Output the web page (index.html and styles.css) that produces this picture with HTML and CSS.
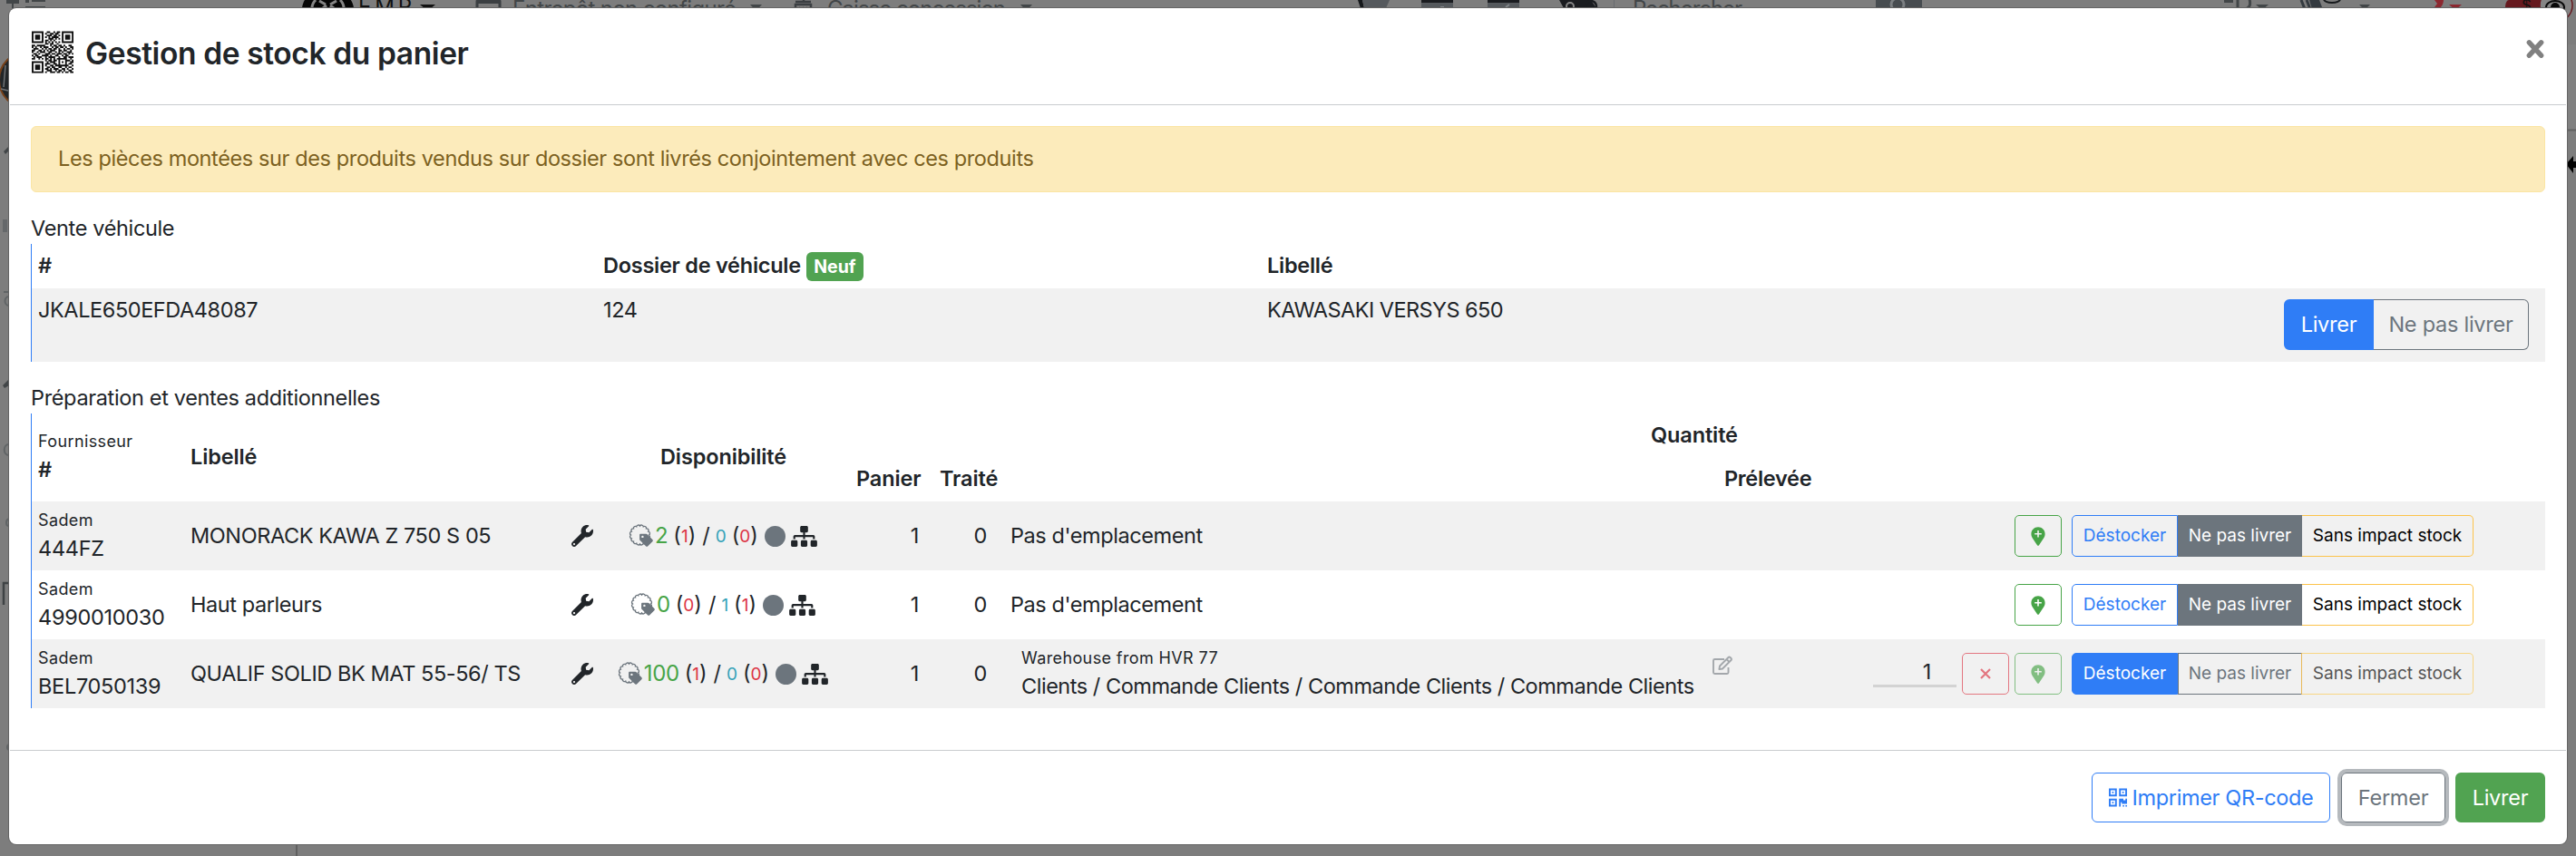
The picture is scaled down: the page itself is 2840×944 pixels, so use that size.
FILE: index.html
```html
<!DOCTYPE html>
<html lang="fr">
<head>
<meta charset="utf-8">
<title>Gestion de stock du panier</title>
<link rel="stylesheet" href="styles.css">
</head>
<body>
<svg class="defs" width="0" height="0" aria-hidden="true">
  <symbol id="wrench" viewBox="0 0 512 512"><path d="M507.700 109.100c-2.200-9-13.500-12.100-20.100-5.500l-74.400 74.400-67.900-11.300L334 98.900l74.400-74.400c6.600-6.600 3.400-17.900-5.700-20.200-47.400-11.700-99.600.9-136.600 37.900-39.600 39.600-50.500 97.100-34.100 147.200L18.700 402.800c-25 25-25 65.500 0 90.500s65.500 25 90.500 0l213.200-213.200c50.100 16.700 107.500 5.700 147.400-34.200 37.100-37.100 49.700-89.300 37.900-136.800zM64 472c-13.200 0-24-10.800-24-24 0-13.300 10.700-24 24-24s24 10.700 24 24c0 13.200-10.700 24-24 24z"/></symbol>
  <symbol id="tag" viewBox="0 0 28 26"><path d="M22.500 12a2.100 2.100 0 0 1-.76 3.830a2.100 2.100 0 0 1-2.170 3.240a2.100 2.100 0 0 1-3.240 2.170a2.100 2.100 0 0 1-3.830.76a2.100 2.100 0 0 1-3.830-.76a2.100 2.100 0 0 1-3.240-2.170a2.100 2.100 0 0 1-2.170-3.240a2.100 2.100 0 0 1-.76-3.830a2.100 2.100 0 0 1 .76-3.830a2.100 2.100 0 0 1 2.170-3.240a2.100 2.100 0 0 1 3.240-2.170a2.100 2.100 0 0 1 3.830-.76a2.100 2.100 0 0 1 3.830.76a2.100 2.100 0 0 1 3.240 2.170a2.100 2.100 0 0 1 2.170 3.240a2.100 2.100 0 0 1 .76 3.830z" fill="none" stroke="#6c757d" stroke-width="1.400"/><path d="M13.200 10.800h6.200c.6 0 1 .2 1.400.6l5.500 5.600c.7.700.7 1.600 0 2.300l-5 5c-.7.700-1.600.7-2.300 0l-6.300-6.200c-.4-.4-.6-.8-.6-1.300v-4.900c0-.7.500-1.100 1.100-1.100z" fill="#6c757d"/><circle cx="15.400" cy="13.900" r="1.200" fill="#f2f2f2"/></symbol>
  <symbol id="tree" viewBox="0 0 640 512"><path d="M128 352H32c-17.700 0-32 14.300-32 32v96c0 17.700 14.300 32 32 32h96c17.700 0 32-14.300 32-32v-96c0-17.700-14.300-32-32-32zm-24-80h192v48h48v-48h192v48h48v-57.600c0-21.200-17.200-38.400-38.400-38.400H344v-64h40c17.700 0 32-14.300 32-32V32c0-17.700-14.300-32-32-32H256c-17.700 0-32 14.300-32 32v96c0 17.700 14.300 32 32 32h40v64H94.400C73.200 224 56 241.200 56 262.400V320h48v-48zm264 80h-96c-17.700 0-32 14.300-32 32v96c0 17.700 14.300 32 32 32h96c17.700 0 32-14.300 32-32v-96c0-17.700-14.300-32-32-32zm240 0h-96c-17.700 0-32 14.300-32 32v96c0 17.700 14.300 32 32 32h96c17.700 0 32-14.300 32-32v-96c0-17.700-14.300-32-32-32z"/></symbol>
  <symbol id="pin" viewBox="0 0 16 21"><path fill="currentColor" fill-rule="evenodd" d="M8 .2C3.700.2.400 3.500.400 7.800c0 3.100 1.200 4.600 6.600 12.400.5.700 1.500.7 2 0 5.400-7.800 6.600-9.300 6.600-12.400C15.600 3.500 12.300.2 8 .2zM7.200 4h1.600v3h3v1.600h-3v3H7.200v-3h-3V7h3z"/></symbol>
  <symbol id="edit" viewBox="0 0 24 22"><path d="M14 4H3.500C2.500 4 2 4.600 2 5.500v13c0 .9.500 1.500 1.500 1.500H17c1 0 1.500-.6 1.500-1.500V13M9 11.500 18.500 2c.6-.6 1.400-.6 2 0l1 1c.6.600.6 1.400 0 2L12 14.500l-3.600.6zM16.500 4l3 3" fill="none" stroke="#a3a7ab" stroke-width="1.900" stroke-linejoin="round"/></symbol>
  <symbol id="qrsmall" viewBox="0 0 21 21"><path fill="currentColor" fill-rule="evenodd" d="M0 0h9.200v9.200H0zM2 2v5.200h5.200V2zM3.700 3.700h1.800v1.800H3.700zM11.800 0H21v9.200h-9.200zM13.800 2v5.200H19V2zM15.500 3.700h1.800v1.800h-1.800zM0 11.800h9.200V21H0zM2 13.800V19h5.200v-5.200zM3.700 15.500h1.800v1.800H3.700zM11.800 11.800h5v1.800h2.400v-1.800H21v6h-6V16h-1.300v5h-1.900zM16 19.300h1.800V21H16zM19.200 19.300H21V21h-1.800z"/></symbol>
</svg>

<svg class="backdrop" viewBox="0 0 2840 944" aria-hidden="true">
  <rect width="2840" height="944" fill="#7d7d7d"/>
  <path d="M7 0h14v4H7zM13 3h2v6h-2zM28 0h4v3h-4zM35 0h15v2H35zM28 7h22v2H28z" fill="#424648"/>
  <path d="M333 9c1-9 7-17 17-18h22c10 1 17 9 18 18z" fill="#060606"/>
  <path d="M344 9c0-4 2-7 4-9M379 9c0-4-2-7-4-9M352 1l7 4M371 1l-7 4M356 9l4-3M368 9l-4-3" stroke="#858585" stroke-width="3" fill="none"/>
  <text x="395" y="16" font-size="24" fill="#111" textLength="59">EMP</text>
  <path d="M463 5h17l-8.500 7z" fill="#111"/>
  <path d="M526 12V2c0-2 2-3 4-3h17c2 0 4 1 4 3v10" fill="none" stroke="#3b3f42" stroke-width="3"/><path d="M525 0h27v4h-27z" fill="#3b3f42"/>
  <text x="565" y="18" font-size="24" fill="#424648" textLength="247">Entrepôt non configuré</text>
  <path d="M827 5h13l-6.500 7zM1125 5h13l-6.500 7z" fill="#424648"/>
  <path d="M877 2h17M886 0v3M877 12V5h17v7M881 9h1M885 9h1M889 9h1" stroke="#3b3f42" stroke-width="2.500" fill="none"/>
  <text x="912" y="18" font-size="24" fill="#424648" textLength="197">Caisse concession</text>
  <path d="M1497 0h5l2 9h-4z" fill="#15181b"/><path d="M1502 0h30l-4 9h-24z" fill="#55595d"/>
  <path d="M1567 0h35v3h-35zM1640 0h35v3h-35zM1719 0h35l6 9h-36z" fill="#1a1c20"/><path d="M1567 3h35v7h-35zM1640 3h35v7h-35z" fill="#55595d"/>
  <path d="M1660 8l4-3M1588 8h4" stroke="#83878a" stroke-width="2"/>
  <circle cx="1731" cy="7" r="4" fill="none" stroke="#858585" stroke-width="2"/><circle cx="1754" cy="7" r="6" fill="none" stroke="#1a1c20" stroke-width="2.500"/>
  <path d="M1779.500 0v9" stroke="#686c70"/>
  <text x="1800" y="18" font-size="24" fill="#424648" textLength="121">Rechercher</text>
  <path d="M2068 0h51v10h-51z" fill="#474c50"/><circle cx="2092" cy="5" r="7" fill="none" stroke="#7b7f82" stroke-width="3"/>
  <path d="M2452 0h10v3h-10z" fill="#424648"/><path d="M2467 0v10h6c9 0 8-7 7-11" fill="none" stroke="#424648" stroke-width="3"/>
  <path d="M2487 5h14l-7 6zM2601 5h12l-6 6z" fill="#424648"/><path d="M2537 0l4 10M2543 0l4 10" stroke="#343a40" stroke-width="3"/><path d="M2546 0h11l3 8-11 2z" fill="#343a40"/>
  <ellipse cx="2571" cy="-1" rx="9" ry="4" fill="none" stroke="#171a1d" stroke-width="2"/>
  <path d="M2684 0h10c0 4-2 7-5 10l-5-2 3-4zM2700 5h14l-7 6z" fill="#8c2830"/>
  <path d="M2762 9c0-6 2-9 4-9h38v10z" fill="#66191f"/><text x="2780" y="12" font-size="17" fill="#111">$</text>
  <circle cx="2818" cy="6" r="18" fill="#858585" stroke="#66191f" stroke-width="1.500"/><ellipse cx="2817" cy="8" rx="10" ry="7" fill="none" stroke="#080808" stroke-width="2"/><circle cx="2817" cy="8" r="5" fill="#080808"/>
  <path d="M2830 49h10v94h-10z" fill="#818181"/><path d="M2830 143.500h10" stroke="#616161" stroke-width="2"/><path d="M2829 181l8-9v6h3v7h-3v6z" fill="#000"/>
  <circle cx="30" cy="88" r="31" fill="#222628" stroke="#774119" stroke-width="2"/><path d="M1 98l8 2M6 72l-2 24" stroke="#717476" stroke-width="1.500"/>
  <path d="M4 167l6-6v5l-4 4zM3 425l7-7v7l-5 3z" fill="#424648"/><path d="M3 242h5v14H3z" fill="#65686a"/>
  <path d="M4 322h6M10 327c-6 0-6 10 0 10M10 490c-7 0-7 12 0 12M10 572c-4 1-4 8 0 8" stroke="#606466" stroke-width="2" fill="none"/>
  <path d="M10 643H4v24" stroke="#3f4345" stroke-width="2.500" fill="none"/>
  <circle cx="11" cy="824" r="4" fill="#606365"/>
  <path d="M327 931v13" stroke="#606060" stroke-width="2"/>
</svg>

<main class="modal">
  <header class="modal-header">
    <svg id="qr" class="qr" viewBox="0 0 25 25"></svg>
    <h1 class="title">Gestion de stock du panier</h1>
    <svg class="close" viewBox="0 0 18 20"><path d="M3 3.500l12 13M15 3.500l-12 13" stroke="#808080" stroke-width="5" stroke-linecap="round"/></svg>
  </header>

  <section class="modal-body">
    <div class="alert">Les pièces montées sur des produits vendus sur dossier sont livrés conjointement avec ces produits</div>

    <h2 class="section-title">Vente véhicule</h2>
    <div class="table">
      <div class="vehicle-row vehicle-head">
        <span>#</span>
        <span class="with-badge">Dossier de véhicule<span class="badge">Neuf</span></span>
        <span>Libellé</span>
      </div>
      <div class="vehicle-row vehicle-item">
        <span>JKALE650EFDA48087</span>
        <span>124</span>
        <span class="model">KAWASAKI VERSYS 650</span>
        <div class="toggle">
          <span class="btn btn-primary w-livrer">Livrer</span><span class="btn btn-outline w-nepas">Ne pas livrer</span>
        </div>
      </div>
    </div>

    <h2 class="section-title">Préparation et ventes additionnelles</h2>
    <div class="table">
      <div class="stock-head">
        <div class="h-supplier"><small>Fournisseur</small><b>#</b></div>
        <b class="h-label">Libellé</b>
        <b class="h-dispo">Disponibilité</b>
        <div class="h-qty">
          <b class="h-qty-title">Quantité</b>
          <div class="h-qty-sub"><b class="h-panier">Panier</b><b class="h-traite">Traité</b><b class="h-prel">Prélevée</b></div>
        </div>
      </div>

      <div class="stock-row shaded">
        <div class="supplier"><small>Sadem</small><span>444FZ</span></div>
        <span class="label">MONORACK KAWA Z 750 S 05</span>
        <svg class="wrench"><use href="#wrench"/></svg>
        <div class="dispo"><svg class="tag"><use href="#tag"/></svg><span class="g">2</span><span class="p">(<i class="r">1</i>)</span><span class="s">/</span><i class="b">0</i><span class="p">(<i class="r">0</i>)</span><span class="dot"></span><svg class="tree"><use href="#tree"/></svg></div>
        <span class="num">1</span><span class="num">0</span>
        <span class="place">Pas d'emplacement</span>
        <div class="actions"><span class="ico green"><svg class="pin"><use href="#pin"/></svg></span>
          <div class="group"><span class="sm a1">Déstocker</span><span class="sm a2 on-grey">Ne pas livrer</span><span class="sm a3">Sans impact stock</span></div></div>
      </div>

      <div class="stock-row">
        <div class="supplier"><small>Sadem</small><span>4990010030</span></div>
        <span class="label">Haut parleurs</span>
        <svg class="wrench"><use href="#wrench"/></svg>
        <div class="dispo"><svg class="tag"><use href="#tag"/></svg><span class="g">0</span><span class="p">(<i class="r">0</i>)</span><span class="s">/</span><i class="b">1</i><span class="p">(<i class="r">1</i>)</span><span class="dot"></span><svg class="tree"><use href="#tree"/></svg></div>
        <span class="num">1</span><span class="num">0</span>
        <span class="place">Pas d'emplacement</span>
        <div class="actions"><span class="ico green"><svg class="pin"><use href="#pin"/></svg></span>
          <div class="group"><span class="sm a1">Déstocker</span><span class="sm a2 on-grey">Ne pas livrer</span><span class="sm a3">Sans impact stock</span></div></div>
      </div>

      <div class="stock-row shaded">
        <div class="supplier"><small>Sadem</small><span>BEL7050139</span></div>
        <span class="label">QUALIF SOLID BK MAT 55-56/ TS</span>
        <svg class="wrench"><use href="#wrench"/></svg>
        <div class="dispo"><svg class="tag"><use href="#tag"/></svg><span class="g">100</span><span class="p">(<i class="r">1</i>)</span><span class="s">/</span><i class="b">0</i><span class="p">(<i class="r">0</i>)</span><span class="dot"></span><svg class="tree"><use href="#tree"/></svg></div>
        <span class="num">1</span><span class="num">0</span>
        <div class="place warehouse"><div class="wh-text"><small>Warehouse from HVR 77</small><span>Clients / Commande Clients / Commande Clients / Commande Clients</span></div><svg class="edit"><use href="#edit"/></svg></div>
        <div class="actions"><span class="qty">1</span><span class="ico red faded"><svg class="cross" viewBox="0 0 12 12"><path d="M1 1l10 10M11 1L1 11" stroke="currentColor" stroke-width="2.200"/></svg></span><span class="ico green faded"><svg class="pin"><use href="#pin"/></svg></span>
          <div class="group"><span class="sm a1 on-blue">Déstocker</span><span class="sm a2">Ne pas livrer</span><span class="sm a3 faded-warn">Sans impact stock</span></div></div>
      </div>
    </div>
  </section>

  <footer class="modal-footer">
    <span class="btn btn-print"><svg class="qrsmall"><use href="#qrsmall"/></svg>Imprimer QR-code</span>
    <span class="btn btn-close">Fermer</span>
    <span class="btn btn-success">Livrer</span>
  </footer>
</main>
<script src="qr.js"></script>
</body>
</html>
```
FILE: qr.js
```js
const rows = [
  "1111111001100101101111111",
  "1000001010011011001000001",
  "1011101001110110101011101",
  "1011101010101111001011101",
  "1011101000111010101011101",
  "1000001011010100001000001",
  "1111111010101010101111111",
  "0000000011011001000000000",
  "1101111100010110110100110",
  "1010010111001011011010011",
  "0111001010110110100101101",
  "1100110101011100110110010",
  "1001011100110010101001110",
  "0110100011101101110110101",
  "1011001111010011001011000",
  "0101110010111100100110111",
  "1100101011010101111110010",
  "0000000010110110100011101",
  "1111111001011100101010011",
  "1000001011100110100010110",
  "1011101010011011111111001",
  "1011101001101100110010110",
  "1011101011010111001101001",
  "1000001001110010110100110",
  "1111111010011101101011011"
];
const d = rows.map((row, y) => [...row].map((c, x) => c === "1" ? `M${x} ${y}h1.04v1.04h-1.04z` : "").join("")).join("");
const path = document.createElementNS("http://www.w3.org/2000/svg", "path");
path.setAttribute("d", d);
path.setAttribute("fill", "#111");
document.getElementById("qr").appendChild(path);
```
FILE: styles.css
```css
* { box-sizing: border-box; }
body {
  margin: 0; width: 2840px; height: 944px; overflow: hidden; position: relative;
  background: #7d7d7d; color: #212529;
  font-family: Inter, "Liberation Sans", sans-serif; font-size: 23.500px; line-height: 36px;
  letter-spacing: -0.42px; white-space: nowrap;
}
.defs { position: absolute; }
.backdrop { position: absolute; left: 0; top: 0; width: 2840px; height: 944px; letter-spacing: 0; }
.modal {
  position: absolute; left: 10px; top: 9px; width: 2820px; height: 922px;
  background: #fff; border-radius: 8px; box-shadow: 0 0 0 1px #646464;
  display: flex; flex-direction: column;
}
i { font-style: normal; }
b { font-weight: 600; letter-spacing: -0.12px; }
small { font-size: 18px; line-height: 28px; letter-spacing: 0.38px; }

.modal-header {
  height: 107px; padding: 25px 24px 0; border-bottom: 1px solid #c9cccf;
  display: flex; align-items: flex-start; margin: 0 1px;
}
.qr { width: 46px; height: 47px; margin-right: 13px; }
.title { margin: 1px auto 0 0; font-size: 33.500px; font-weight: 560; line-height: 48px; letter-spacing: -0.38px; }
.close { width: 20px; height: 22px; margin-top: 9px; }

.modal-body { padding: 23px 24px 0; height: 711px; }
.alert {
  height: 73px; padding: 0 29px 2px; border: 1px solid #fbe5a3; border-radius: 6px;
  background: #fcebbb; color: #7c6121; display: flex; align-items: center; letter-spacing: -0.385px;
}
.section-title { margin: 22px 0 0; font-size: inherit; font-weight: 400; line-height: 35px; letter-spacing: -0.35px; }
.table { border-left: 1px solid #2f7df6; }

.vehicle-row { display: grid; grid-template-columns: 623px 732px 1fr auto; padding-left: 7px; }
.vehicle-head { height: 49px; padding-top: 6px; font-weight: 600; letter-spacing: -0.26px; }
.vehicle-item { height: 81px; padding-top: 6px; padding-right: 18px; background: #f1f1f1; }
.model { letter-spacing: -0.55px; }
.with-badge { display: flex; align-items: flex-start; }
.badge {
  margin: 3px 0 0 6px; width: 63px; height: 32px; border-radius: 6px; background: #51a351; color: #fff;
  font-size: 19.500px; line-height: 32px; font-weight: 700; text-align: center; letter-spacing: 0;
}
.toggle { display: flex; margin-top: 6px; }
.btn {
  height: 56px; border-radius: 6px; display: flex; align-items: center; justify-content: center;
  border: 2px solid; letter-spacing: -0.25px;
}
.btn-primary { background: #2f7df6; border-color: #2f7df6; color: #fff; border-radius: 6px 0 0 6px; }
.btn-outline { border: 1px solid #6c757d; border-left: 0; color: #6c757d; border-radius: 0 6px 6px 0; }
.w-livrer { width: 99px; }
.w-nepas { width: 171px; }

.stock-head { height: 97px; display: grid; grid-template-columns: 168px 477px 230px 1fr; padding-left: 7px; }
.h-supplier { display: flex; flex-direction: column; padding-top: 16px; }
.h-supplier small { line-height: 30px; }
.h-supplier b { line-height: 32px; }
.h-label { padding-top: 30px; }
.h-dispo { padding: 30px 0 0 41px; }
.h-qty { padding-top: 6px; display: flex; flex-direction: column; }
.h-qty-title { padding-left: 903px; }
.h-qty-sub { display: flex; padding-top: 12px; }
.h-panier { width: 119px; padding-left: 27px; }
.h-traite { width: 865px; }
.h-prel { width: 120px; letter-spacing: -0.3px; }

.stock-row {
  height: 76px; display: grid; align-items: center; padding-left: 7px;
  grid-template-columns: 168px 420px 26px 273px 84px 75px 795px 1fr;
}
.shaded { background: #f1f1f1; }
.supplier { display: flex; flex-direction: column; padding-bottom: 2px; }
.supplier small { line-height: 28px; }
.supplier span { line-height: 33px; letter-spacing: -0.3px; }
.wrench { width: 24px; height: 24px; fill: #212529; }
.dispo { display: flex; align-items: center; justify-content: center; height: 36px; padding-left: 9px; letter-spacing: 0; }
.tag { width: 28px; height: 26px; flex: none; margin-right: 1px; }
.g { color: #47a447; font-size: 24px; letter-spacing: -0.4px; }
.p { margin-left: 6px; }
.r { color: #dc3545; font-size: 19px; }
.b { color: #36a2b8; font-size: 19px; margin-left: 6px; padding-top: 2px; }
.s { margin-left: 7px; }
.dot { width: 23px; height: 23px; border-radius: 50%; background: #6c757d; margin: 0 6px 0 7px; }
.tree { width: 29px; height: 23px; fill: #212529; flex: none; }
.num { text-align: right; }
.place { padding-left: 26px; }
.warehouse { display: flex; padding-left: 38px; letter-spacing: -0.47px; }
.wh-text { display: flex; flex: none; flex-direction: column; width: 761px; padding-bottom: 2px; }
.wh-text small { line-height: 28px; }
.wh-text span { line-height: 33px; }
.edit { width: 24px; height: 22px; margin-top: 11px; flex: none; }
.actions { display: flex; justify-content: flex-end; align-items: center; padding-right: 79px; }
.qty { width: 92px; height: 32px; border-bottom: 3px solid #d3d3d3; margin: -2px 6px 0 0; padding-right: 28px; line-height: 29px; text-align: right; }
.ico { width: 52px; height: 46px; border: 1px solid; border-radius: 5px; display: flex; align-items: center; justify-content: center; }
.green { color: #47a447; margin-right: 11px; }
.red { color: #dc3545; margin-right: 6px; }
.faded { opacity: .65; }
.pin { width: 16px; height: 21px; }
.cross { width: 12px; height: 12px; }
.group { display: flex; font-size: 19px; letter-spacing: 0; }
.sm { height: 46px; border: 1px solid; display: flex; align-items: center; justify-content: center; }
.a1 { width: 117px; color: #2f7df6; border-radius: 5px 0 0 5px; }
.a2 { width: 137px; color: #6c757d; }
.a3 { width: 189px; border-color: #fcc34b; color: #000; border-radius: 0 5px 5px 0; border-left: 0; }
.on-grey { background: #6c757d; border-color: #6c757d; color: #fff; }
.on-blue { background: #2f7df6; border-color: #2f7df6; color: #fff; }
.faded-warn { color: #555; border-color: #f8d683; border-left: 1px solid #e8b95a; margin-left: -1px; width: 190px; }

.modal-footer {
  height: 104px; border-top: 1px solid #c9cccf; padding: 24px 23px 0; margin: 0 1px;
  display: flex; justify-content: flex-end; align-items: flex-start;
}
.modal-footer .btn { height: 55px; }
.modal-footer .btn-print { width: 263px; border: 1px solid #2f7df6; color: #2f7df6; margin-right: 12px; letter-spacing: -0.35px; }
.qrsmall { width: 20px; height: 21px; margin-right: 6px; }
.btn-close { width: 115px; border: 1px solid #6c757d; color: #6c757d; box-shadow: 0 0 0 4px #b5b9bd; margin-right: 11px; }
.btn-success { width: 99px; background: #51a351; border-color: #51a351; color: #fff; }
```
